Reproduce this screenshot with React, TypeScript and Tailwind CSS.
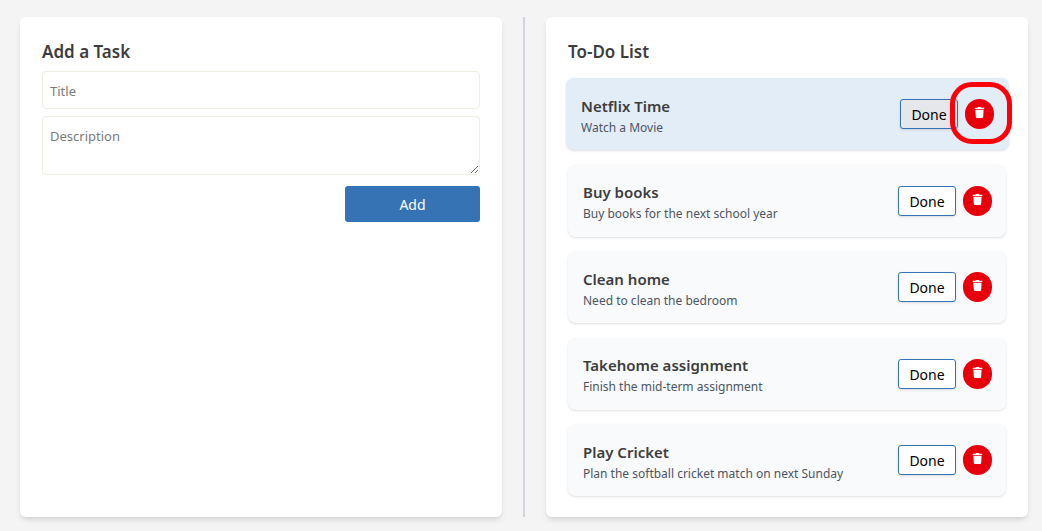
import { FaTrash } from "react-icons/fa";

type Task = { title: string; description: string };

const tasks: Task[] = [
  { title: "Netflix Time", description: "Watch a Movie" },
  { title: "Buy books", description: "Buy books for the next school year" },
  { title: "Clean home", description: "Need to clean the bedroom" },
  { title: "Takehome assignment", description: "Finish the mid-term assignment" },
  { title: "Play Cricket", description: "Plan the softball cricket match on next Sunday" },
];

function TaskForm() {
  return (
    <section className="min-w-0 flex-1 rounded-md bg-white px-[22px] pt-[23px] pb-5 shadow-md">
      <h2 className="text-[17px] leading-6 font-semibold text-[#3d3d3d]">Add a Task</h2>
      <form className="mt-[7px] flex flex-col" onSubmit={(e) => e.preventDefault()}>
        <input
          type="text"
          aria-label="Title"
          placeholder="Title"
          className="h-[38px] w-full rounded-sm border border-[#eeeee2] px-[7px] pt-0.5 text-[13px] placeholder:text-[#7a7a7a] focus:outline-none"
        />
        <textarea
          aria-label="Description"
          placeholder="Description"
          className="mt-[7px] block h-[59px] w-full rounded-sm border border-[#eeeee2] px-[7px] py-[9px] text-[13px] leading-5 placeholder:text-[#7a7a7a] focus:outline-none"
        />
        <button
          type="submit"
          className="mt-[11px] h-9 w-[135px] self-end rounded-[3px] bg-[#3673b5] pt-0.5 text-sm text-white"
        >
          Add
        </button>
      </form>
    </section>
  );
}

function TaskCard({ task, active }: { task: Task; active: boolean }) {
  return (
    <li
      className={
        active
          ? "-mr-[3px] -ml-0.5 flex h-[72px] items-center rounded-lg bg-[#e3edf8] pr-[15px] pl-[15px] shadow-sm"
          : "flex h-[72px] items-center rounded-lg bg-[#f9fafc] pr-3.5 pl-[15px] shadow-sm"
      }
    >
      <div className="min-w-0 flex-1 pt-1">
        <h3 className="text-[15px] leading-[22px] font-semibold text-[#3d3d3d]">{task.title}</h3>
        <p className="mt-px text-xs leading-5 text-[#4b5563]">{task.description}</p>
      </div>
      <button
        type="button"
        className={
          active
            ? "mr-[7px] h-[30px] w-[58px] rounded-[3px] border border-[#3673b5] bg-[#e5e7eb] pt-0.5 text-sm text-black shadow-sm"
            : "mr-[7px] h-[30px] w-[58px] rounded-[3px] border border-[#3673b5] bg-white pt-0.5 text-sm text-black shadow-sm"
        }
      >
        Done
      </button>
      <button
        type="button"
        aria-label={`Delete ${task.title}`}
        className="relative flex h-[30px] w-[29px] items-center justify-center rounded-full bg-[#e7000b] pb-[3px] text-white"
      >
        <FaTrash size={11} />
        {active && (
          <span className="pointer-events-none absolute -top-[17px] -left-[15px] h-[62px] w-[62px] rounded-[22px] border-5 border-[#ff0009]" />
        )}
      </button>
    </li>
  );
}

export default function App() {
  return (
    <main className="flex min-h-screen bg-[#f4f4f4] pt-[17px] pr-3.5 pb-3.5 pl-5 font-['Noto_Sans',sans-serif]">
      <TaskForm />
      <div className="mx-[21px] w-0.5 shrink-0 bg-[#d1d5dc]" />
      <section className="flex min-w-0 flex-1 flex-col rounded-md bg-white px-[22px] pt-[23px] pb-[21px] shadow-md">
        <h2 className="text-[17px] leading-6 font-semibold text-[#3d3d3d]">To-Do List</h2>
        <ul className="mt-3.5 flex flex-1 flex-col justify-between gap-3">
          {tasks.map((task, i) => (
            <TaskCard key={task.title} task={task} active={i === 0} />
          ))}
        </ul>
      </section>
    </main>
  );
}
